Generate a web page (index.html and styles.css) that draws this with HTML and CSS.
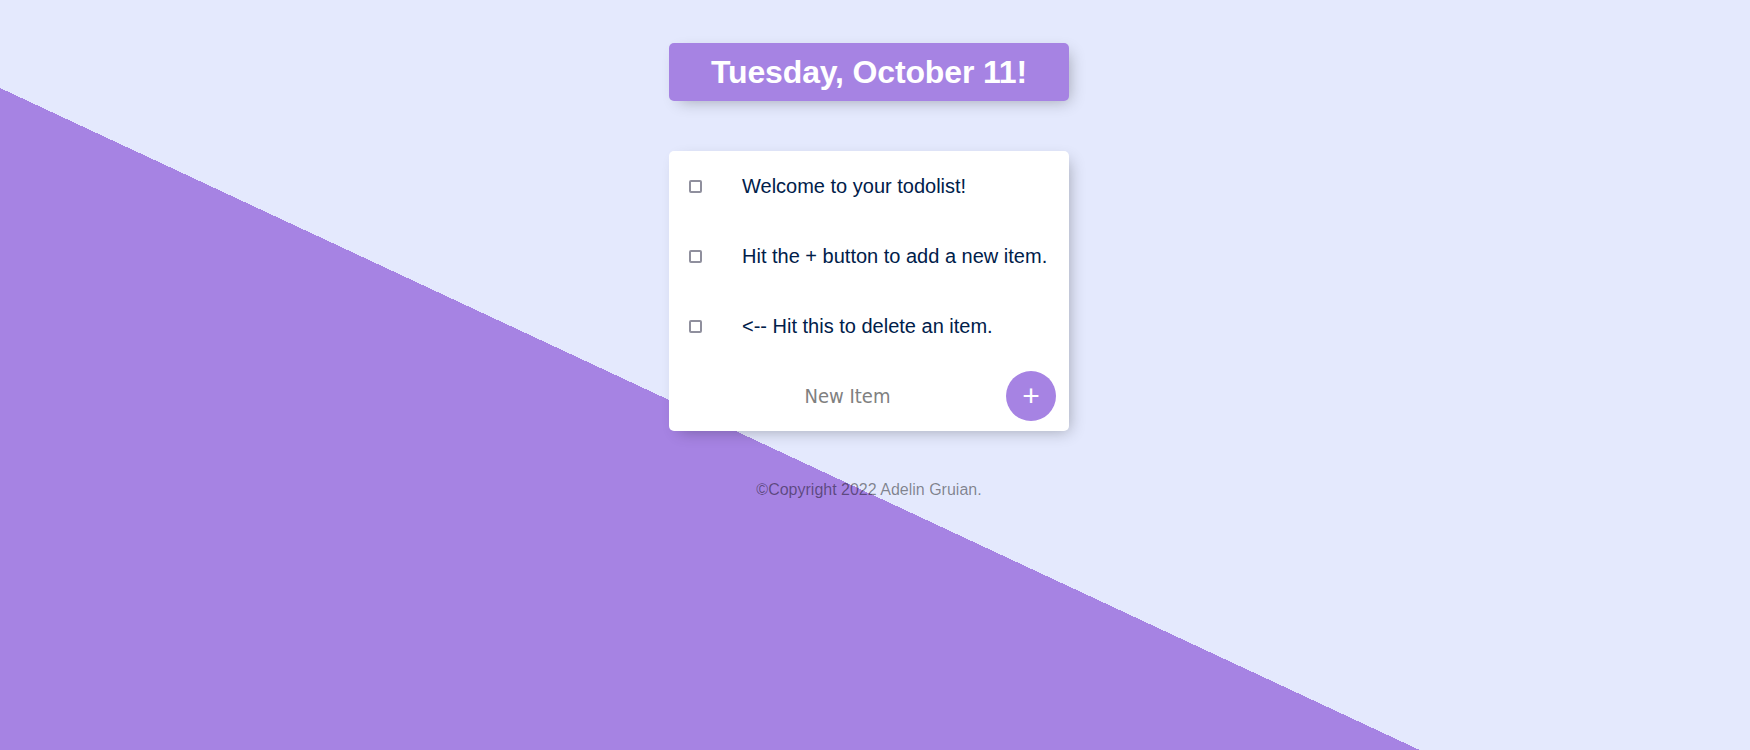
FILE: index.html
```html
<!DOCTYPE html>
<html lang="en">
<head>
<meta charset="utf-8">
<title>To-Do List</title>
<link rel="stylesheet" href="styles.css">
</head>
<body>
  <div class="box heading">
    <h1 class="heading-title">Tuesday, October 11!</h1>
  </div>
  <div class="box list">
    <div class="item">
      <input class="check" type="checkbox">
      <p class="item-text">Welcome to your todolist!</p>
    </div>
    <div class="item">
      <input class="check" type="checkbox">
      <p class="item-text">Hit the + button to add a new item.</p>
    </div>
    <div class="item">
      <input class="check" type="checkbox">
      <p class="item-text">&lt;-- Hit this to delete an item.</p>
    </div>
    <form class="item new-form" action="#" onsubmit="return false">
      <input class="new-input" type="text" name="newItem" placeholder="New Item" autocomplete="off">
      <button class="add-btn" type="submit" name="list">+</button>
    </form>
  </div>
  <footer class="footer">©Copyright 2022 Adelin Gruian.</footer>
</body>
</html>
```
FILE: styles.css
```css
html {
  background-color: #E4E9FD;
  background-image: linear-gradient(25deg, #A683E3 50%, #E4E9FD 50%);
  background-repeat: no-repeat;
  background-size: 100% 992px;
  font-family: "Liberation Sans", Arial, sans-serif;
}

body {
  margin: 0;
  padding: 43px 12px 0 0;
}

.box {
  max-width: 400px;
  margin: 0 auto 50px;
  background: #fff;
  border-radius: 5px;
  box-shadow: 5px 5px 15px -5px rgba(0, 0, 0, 0.3);
}

.heading {
  background-color: #A683E3;
  text-align: center;
}

.heading-title {
  margin: 0;
  padding: 10px;
  color: #fff;
  font-size: 32px;
  line-height: 38px;
  font-weight: bold;
  letter-spacing: -0.15px;
}

.item {
  min-height: 70px;
  display: flex;
  align-items: center;
}

.check {
  appearance: none;
  -webkit-appearance: none;
  box-sizing: border-box;
  margin: 20px;
  width: 13px;
  height: 13px;
  border: 2px solid #8f8f9d;
  border-radius: 2px;
  background: #fff;
  flex-shrink: 0;
}

.item-text {
  margin: 0;
  padding: 20px;
  font-size: 20px;
  font-weight: 200;
  color: #00204a;
}

.new-form {
  margin: 0 0 0 20px;
  text-align: center;
}

.new-input {
  text-align: center;
  height: 60px;
  border: none;
  padding: 1px 2px;
  background: transparent;
  font-family: "DejaVu Sans Condensed", "DejaVu Sans", sans-serif;
  font-stretch: condensed;
  font-size: 20px;
  font-weight: 200;
  width: 313px;
  box-sizing: content-box;
}

.new-input:focus {
  outline: none;
  box-shadow: inset 0 -3px 0 0 #A683E3;
}

.new-input::placeholder {
  color: grey;
  opacity: 1;
}

.add-btn {
  min-height: 50px;
  width: 50px;
  padding: 0;
  border: 0;
  border-radius: 50%;
  background-color: #A683E3;
  color: #fff;
  font-family: "Liberation Sans", Arial, sans-serif;
  font-size: 30px;
  line-height: 1;
}

.footer {
  color: rgba(0, 0, 0, 0.45);
  text-align: center;
  font-size: 16px;
}
```
